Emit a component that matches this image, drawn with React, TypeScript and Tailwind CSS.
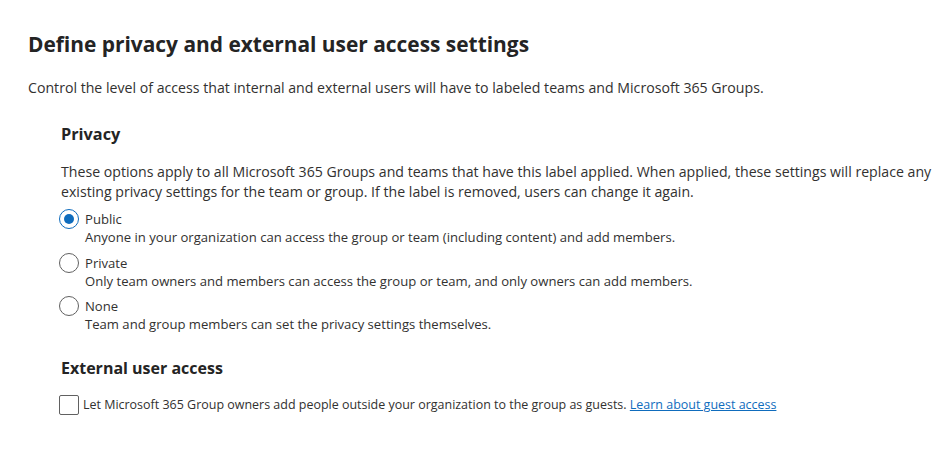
import React from "react";

const font = { fontFamily: '"Open Sans", "Noto Sans", sans-serif' };

function Radio({ checked, label, desc }: { checked?: boolean; label: string; desc: string }) {
  return (
    <div className="flex">
      <div className="flex h-[18px] w-[26px] shrink-0 items-center">
        <div
          className={
            checked
              ? "flex h-[20px] w-[20px] items-center justify-center rounded-full border border-[#0f6cbd]"
              : "flex h-[20px] w-[20px] items-center justify-center rounded-full border border-[#616161]"
          }
        >
          {checked && <div className="h-[10px] w-[10px] rounded-full bg-[#0f6cbd]" />}
        </div>
      </div>
      <div className="flex flex-col text-[13.1px] leading-[18px] text-[#323130]">
        <span>{label}</span>
        <span>{desc}</span>
      </div>
    </div>
  );
}

export default function App() {
  return (
    <div className="min-h-[455px] w-[952px] overflow-hidden bg-white px-[28px] pt-[30px]" style={font}>
      <h1 className="text-[20.9px] font-bold leading-[28px] text-[#242424]">
        Define privacy and external user access settings
      </h1>
      <p className="mt-[20px] text-[14.15px] leading-[20px] text-[#323130]">
        Control the level of access that internal and external users will have to labeled teams and Microsoft 365 Groups.
      </p>
      <div className="pl-[33px]">
        <h2 className="mt-[24px] text-[16.3px] font-bold leading-[24px] text-[#242424]">Privacy</h2>
        <p className="mt-[16px] w-[884px] text-[14.15px] leading-[20px] text-[#323130]">
          These options apply to all Microsoft 365 Groups and teams that have this label applied. When applied, these
          settings will replace any existing privacy settings for the team or group. If the label is removed, users can
          change it again.
        </p>
        <div className="mt-[8px] -ml-[2px] flex flex-col gap-[7.5px]">
          <Radio
            checked
            label="Public"
            desc="Anyone in your organization can access the group or team (including content) and add members."
          />
          <Radio
            label="Private"
            desc="Only team owners and members can access the group or team, and only owners can add members."
          />
          <Radio label="None" desc="Team and group members can set the privacy settings themselves." />
        </div>
        <h2 className="mt-[23px] text-[16px] font-bold leading-[24px] text-[#242424]">External user access</h2>
        <div className="mt-[15px] -ml-[2px] flex items-center">
          <div className="h-[20px] w-[20px] shrink-0 rounded-[2px] border border-[#616161]" />
          <span className="ml-[4px] text-[12.47px] leading-[20px] text-[#323130]">
            Let Microsoft 365 Group owners add people outside your organization to the group as guests.{" "}
            <a className="text-[#0f6cbd] underline">Learn about guest access</a>
          </span>
        </div>
      </div>
    </div>
  );
}
